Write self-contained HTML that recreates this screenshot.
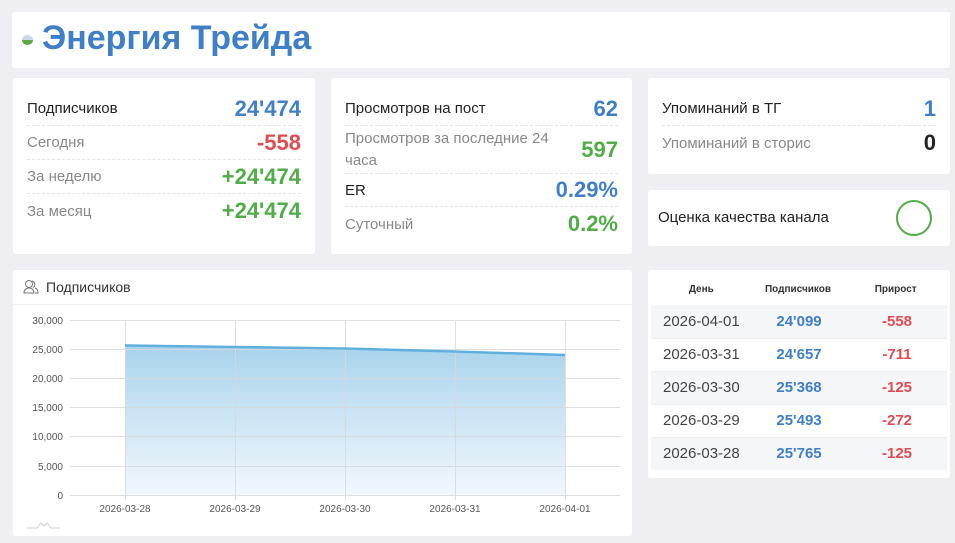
<!DOCTYPE html>
<html><head><meta charset="utf-8"><style>
*{box-sizing:border-box;margin:0;padding:0}
body{width:955px;height:543px;background:#efeff3;font-family:"Liberation Sans",sans-serif;position:relative;overflow:hidden;color:#222}
.card{position:absolute;background:#fff;border-radius:3px}
.row{position:absolute;left:14px;right:14px;display:flex;justify-content:space-between;align-items:center;border-bottom:1px dashed #e6e6e6}
.row.last{border-bottom:none}
.l{font-size:15px;color:#888}
.lb{font-size:15px;color:#222}
.v{font-size:22px;font-weight:bold}
.blue{color:#3f7fc7}.green{color:#4ead45}.red{color:#e04b50}.dark{color:#222}
table{border-collapse:collapse;width:100%}
td{height:33px;font-size:15px;text-align:center}
</style></head><body>
<div class="card" style="left:12px;top:12px;width:938px;height:56px">
<div style="position:absolute;left:10px;top:23px;width:11px;height:10px;border-radius:50%;background:linear-gradient(#c9d7e6 50%,#5aa84a 50%)"></div>
<div style="position:absolute;left:30px;top:7px;font-size:34px;font-weight:bold;color:#3f7fc7">Энергия Трейда</div>
</div>

<div class="card" style="left:13px;top:78px;width:302px;height:176px">
<div class="row" style="top:14px;height:34px"><span class="lb">Подписчиков</span><span class="v blue">24'474</span></div>
<div class="row" style="top:48px;height:34px"><span class="l">Сегодня</span><span class="v red">-558</span></div>
<div class="row" style="top:82px;height:34px"><span class="l">За неделю</span><span class="v green">+24'474</span></div>
<div class="row last" style="top:116px;height:34px"><span class="l">За месяц</span><span class="v green">+24'474</span></div>
</div>

<div class="card" style="left:331px;top:78px;width:301px;height:176px">
<div class="row" style="top:14px;height:34px"><span class="lb">Просмотров на пост</span><span class="v blue">62</span></div>
<div class="row" style="top:48px;height:48px"><span class="l" style="line-height:22px;width:210px">Просмотров за последние 24 часа</span><span class="v green">597</span></div>
<div class="row" style="top:96px;height:33px"><span class="lb">ER</span><span class="v blue">0.29%</span></div>
<div class="row last" style="top:129px;height:34px"><span class="l">Суточный</span><span class="v green">0.2%</span></div>
</div>

<div class="card" style="left:648px;top:78px;width:302px;height:96px">
<div class="row" style="top:14px;height:34px"><span class="lb">Упоминаний в ТГ</span><span class="v blue">1</span></div>
<div class="row last" style="top:48px;height:34px"><span class="l">Упоминаний в сторис</span><span class="v dark">0</span></div>
</div>

<div class="card" style="left:648px;top:190px;width:302px;height:56px">
<span class="lb" style="position:absolute;left:10px;top:19px">Оценка качества канала</span>
<div style="position:absolute;left:248px;top:10px;width:36px;height:36px;border-radius:50%;border:2px solid #4ead45"></div>
</div>

<div class="card" style="left:13px;top:270px;width:619px;height:266px">
<div style="position:absolute;left:0;right:0;top:0;height:35px;border-bottom:1px solid #f0f0f0"></div>
<svg style="position:absolute;left:10px;top:9px" width="16" height="15" viewBox="0 0 16 15" fill="none" stroke="#777" stroke-width="1"><circle cx="6" cy="5" r="3.5"/><path d="M1 14c0-3 2-5 5-5s5 2 5 5z"/><path d="M9 2a3.5 3.5 0 0 1 1 6.5M12 9c2 .5 3 2.5 3 5h-3"/></svg>
<span style="position:absolute;left:33px;top:9px;font-size:14px;color:#333">Подписчиков</span>
</div>
<svg style="position:absolute;left:0;top:0" width="955" height="543">
<defs><linearGradient id="g" x1="0" y1="0" x2="0" y2="1"><stop offset="0" stop-color="#a9d3ec"/><stop offset="1" stop-color="#f2f8fd"/></linearGradient></defs>
<path d="M125 345.5L235 347L345 348.5L455 351.5L565 355V495H125Z" fill="url(#g)"/>
<g stroke="#d8d8d8" stroke-width="1" opacity="0.8">
<line x1="70" y1="320.5" x2="620" y2="320.5"/><line x1="70" y1="349.5" x2="620" y2="349.5"/><line x1="70" y1="378.5" x2="620" y2="378.5"/><line x1="70" y1="407.5" x2="620" y2="407.5"/><line x1="70" y1="436.5" x2="620" y2="436.5"/><line x1="70" y1="466.5" x2="620" y2="466.5"/><line x1="70" y1="495.5" x2="620" y2="495.5"/>
<line x1="125.5" y1="320" x2="125.5" y2="500"/><line x1="235.5" y1="320" x2="235.5" y2="500"/><line x1="345.5" y1="320" x2="345.5" y2="500"/><line x1="455.5" y1="320" x2="455.5" y2="500"/><line x1="565.5" y1="320" x2="565.5" y2="500"/>
</g>
<path d="M125 345.5L235 347L345 348.5L455 351.5L565 355" stroke="#5fb0de" stroke-width="2.5" fill="none"/>
<g font-size="10" fill="#555" text-anchor="end" font-family="Liberation Sans">
<text x="63" y="324">30,000</text><text x="63" y="353">25,000</text><text x="63" y="382">20,000</text><text x="63" y="411">15,000</text><text x="63" y="440">10,000</text><text x="63" y="470">5,000</text><text x="63" y="499">0</text></g>
<g font-size="10" fill="#555" text-anchor="middle" font-family="Liberation Sans">
<text x="125" y="512">2026-03-28</text><text x="235" y="512">2026-03-29</text><text x="345" y="512">2026-03-30</text><text x="455" y="512">2026-03-31</text><text x="565" y="512">2026-04-01</text></g>
<path d="M27 528h10l4-5 3 3 3-3 4 5h9" stroke="#ccc" fill="none"/>
</svg>

<div class="card" style="left:648px;top:270px;width:302px;height:208px;padding:0 3px">
<div style="height:35px;padding-top:4px;display:flex;align-items:center;font-size:10px;font-weight:bold;color:#333">
<span style="width:102px;text-align:center">День</span><span style="width:94px;text-align:center">Подписчиков</span><span style="width:104px;text-align:center">Прирост</span></div>
<table>
<tr style="background:#f5f6f8"><td style="text-align:left;padding-left:12px;color:#444">2026-04-01</td><td class="blue" style="font-weight:bold;width:96px">24'099</td><td class="red" style="font-weight:bold;width:100px">-558</td></tr>
<tr style="border-top:1px solid #eee"><td style="text-align:left;padding-left:12px;color:#444">2026-03-31</td><td class="blue" style="font-weight:bold">24'657</td><td class="red" style="font-weight:bold">-711</td></tr>
<tr style="background:#f5f6f8;border-top:1px solid #eee"><td style="text-align:left;padding-left:12px;color:#444">2026-03-30</td><td class="blue" style="font-weight:bold">25'368</td><td class="red" style="font-weight:bold">-125</td></tr>
<tr style="border-top:1px solid #eee"><td style="text-align:left;padding-left:12px;color:#444">2026-03-29</td><td class="blue" style="font-weight:bold">25'493</td><td class="red" style="font-weight:bold">-272</td></tr>
<tr style="background:#f5f6f8;border-top:1px solid #eee"><td style="text-align:left;padding-left:12px;color:#444">2026-03-28</td><td class="blue" style="font-weight:bold">25'765</td><td class="red" style="font-weight:bold">-125</td></tr>
</table>
</div>
</body></html>
